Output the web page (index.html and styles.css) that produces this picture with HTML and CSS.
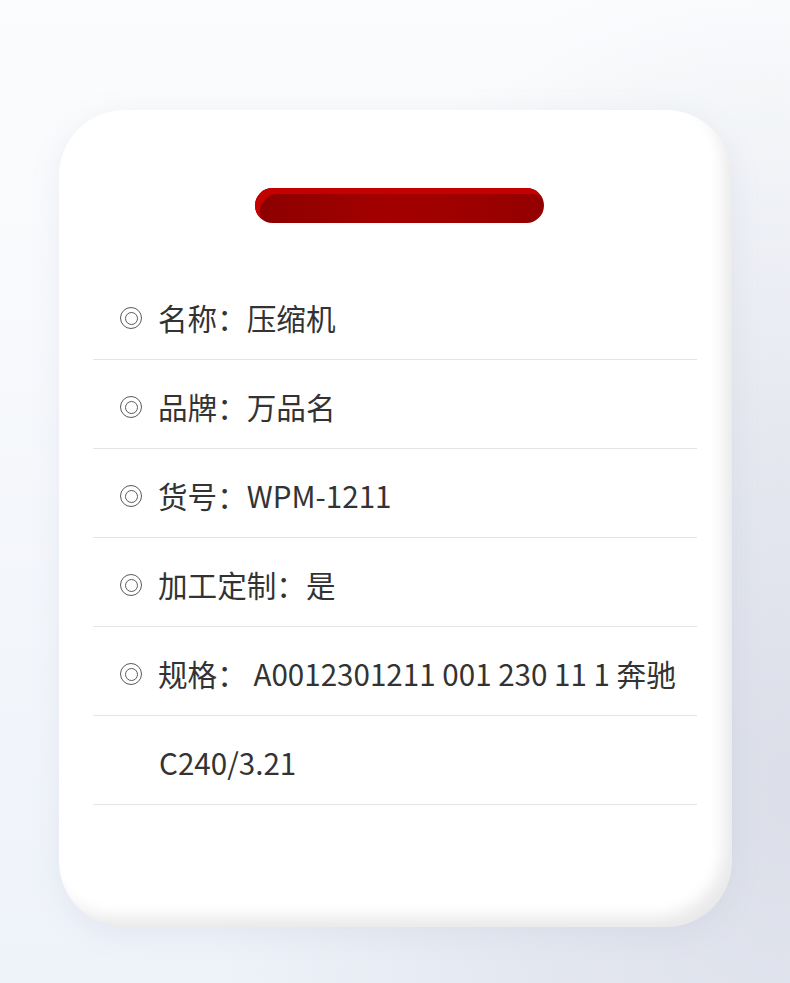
FILE: index.html
```html
<!DOCTYPE html>
<html lang="zh">
<head>
<meta charset="utf-8">
<link rel="stylesheet" href="styles.css">
</head>
<body>
<div class="page">
  <div class="card">
    <div class="bar"></div>
    <ul class="list">
      <li class="row"><span class="mark"></span><span class="txt">名称：压缩机</span></li>
      <li class="row"><span class="mark"></span><span class="txt">品牌：万品名</span></li>
      <li class="row"><span class="mark"></span><span class="txt">货号：WPM-1211</span></li>
      <li class="row"><span class="mark"></span><span class="txt">加工定制：是</span></li>
      <li class="row"><span class="mark"></span><span class="txt">规格：&nbsp;A0012301211 001 230 11 1 奔驰</span></li>
      <li class="row cont"><span class="txt">C240/3.21</span></li>
    </ul>
  </div>
</div>
</body>
</html>
```
FILE: styles.css
```css
html, body {
  margin: 0;
  padding: 0;
}
body {
  width: 790px;
  height: 983px;
  overflow: hidden;
  background:
    radial-gradient(ellipse 75% 85% at 100% 80%, #dcdfe9 0%, rgba(220, 223, 233, 0.6) 45%, rgba(220, 223, 233, 0) 100%),
    linear-gradient(180deg, #fbfcfd 0%, #f7f9fc 35%, #eef2f9 100%);
  font-family: "Noto Sans CJK SC", "Noto Sans", sans-serif;
  color: #333;
}
.page {
  padding: 110px 0 0 59px;
}
.card {
  width: 673px;
  height: 817px;
  box-sizing: border-box;
  background: #fff;
  border-radius: 66px;
  padding: 78px 35px 0 34px;
  box-shadow: inset -12px -14px 16px -4px rgba(0, 0, 0, 0.09), 0 6px 30px rgba(140, 150, 180, 0.12);
}
.bar {
  width: 289px;
  height: 35px;
  margin: 0 0 48px 162px;
  border-radius: 18px;
  background: linear-gradient(90deg, #8c0000 0%, #a30000 45%, #9c0000 80%, #930000 100%);
  box-shadow: inset 5px 6px 0 #c40000;
}
.list {
  list-style: none;
  margin: 0;
  padding: 0;
}
.row {
  display: flex;
  align-items: center;
  height: 89px;
  box-sizing: border-box;
  padding-top: 6px;
  border-bottom: 1px solid #e4e4e4;
}
.mark {
  width: 20px;
  height: 20px;
  margin-left: 27px;
  margin-right: 16px;
  border: 1px solid #5a5a5a;
  border-radius: 50%;
  display: flex;
  align-items: center;
  justify-content: center;
  flex: none;
}
.mark::before {
  content: "";
  width: 11px;
  height: 11px;
  border: 1px solid #5a5a5a;
  border-radius: 50%;
}
.txt {
  font-size: 29.6px;
  line-height: 30px;
  white-space: nowrap;
}
.cont .txt {
  margin-left: 66px;
}
```
